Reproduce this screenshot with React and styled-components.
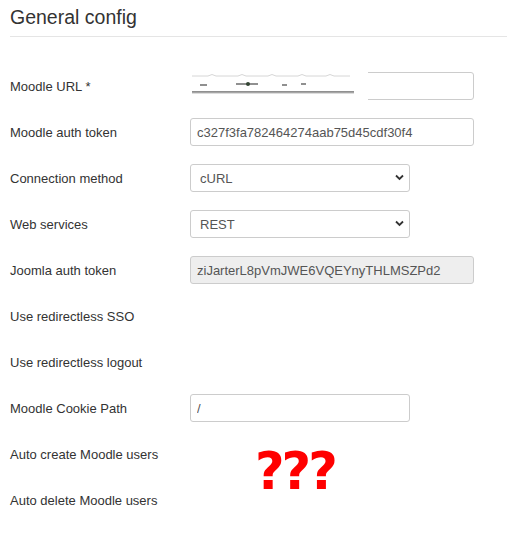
import React from 'react';
import styled, { createGlobalStyle } from 'styled-components';

const GlobalStyle = createGlobalStyle`
  body {
    margin: 0;
    background: #fff;
    font-family: "Liberation Sans", Arial, sans-serif;
    color: #333;
  }
`;

const Page = styled.div`
  padding: 0 0 0 10px;
  width: 497px;
`;

const Heading = styled.h2`
  margin: 0;
  padding: 7px 0 9px;
  font-size: 19.5px;
  font-weight: normal;
  line-height: 20px;
  color: #333;
  border-bottom: 1px solid #e5e5e5;
`;

const Form = styled.div`
  display: flex;
  flex-direction: column;
  padding-top: 26px;
`;

const Row = styled.div`
  display: grid;
  grid-template-columns: 180px 1fr;
  align-items: center;
  height: 46px;
  position: relative;
`;

const Label = styled.label`
  font-size: 13px;
  color: #333;
`;

const TextInput = styled.input`
  box-sizing: border-box;
  width: ${p => p.$w || 284}px;
  height: 28px;
  padding: 0 6px;
  border: 1px solid #ccc;
  border-radius: 3px;
  font-family: "Liberation Sans", Arial, sans-serif;
  font-size: 13px;
  color: #555;
  background: ${p => (p.readOnly ? '#eee' : '#fff')};
  outline: none;
`;

const SelectWrap = styled.div`
  position: relative;
  width: 220px;
  height: 28px;
`;

const Select = styled.select`
  box-sizing: border-box;
  width: 100%;
  height: 28px;
  padding: 0 6px 0 9px;
  border: 1px solid #ccc;
  border-radius: 3px;
  appearance: none;
  background: #fff;
  font-family: "Liberation Sans", Arial, sans-serif;
  font-size: 13px;
  color: #555;
  outline: none;
`;

const Chevron = styled.svg`
  position: absolute;
  right: 6px;
  top: 10px;
  pointer-events: none;
`;

const FieldBox = styled.div`
  position: relative;
  width: 284px;
`;

const Redaction = styled.div`
  position: absolute;
  left: -4px;
  top: -2px;
  width: 182px;
  height: 30px;
  background: #fff;
`;

const Marks = styled.div`
  position: absolute;
  left: 255px;
  top: 446px;
  font-family: "DejaVu Sans", "Liberation Sans", sans-serif;
  font-weight: bold;
  font-size: 51px;
  line-height: 52px;
  letter-spacing: -3px;
  color: #f00;
`;

function Dropdown({ value }) {
  return (
    <SelectWrap>
      <Select defaultValue={value}>
        <option>{value}</option>
      </Select>
      <Chevron width="9" height="7" viewBox="0 0 9 7">
        <path d="M1 1.5 L4.5 5 L8 1.5" fill="none" stroke="#333" strokeWidth="1.8" />
      </Chevron>
    </SelectWrap>
  );
}

export default function App() {
  return (
    <>
      <GlobalStyle />
      <Page>
        <Heading>General config</Heading>
        <Form>
          <Row>
            <Label>Moodle URL *</Label>
            <FieldBox>
              <TextInput defaultValue="" />
              <Redaction>
                <svg width="182" height="30" viewBox="0 0 182 30">
                  <path d="M6 6 H22 Q26 3 30 6 H52 Q56 3 60 6 H82 Q86 3 90 6 H112 Q116 3 120 6 H140 Q144 3 148 6 H164" fill="none" stroke="#ccc" strokeWidth="0.8" />
                  <path d="M14 15 H21 M50 14 H72 M96 15 H101 M115 14 H120 M6 22 H168" stroke="#222" strokeWidth="1.2" />
                  <circle cx="62" cy="14" r="2" fill="#343" />
                  <path d="M6 23 H168" stroke="#bbb" strokeWidth="1" />
                </svg>
              </Redaction>
            </FieldBox>
          </Row>
          <Row>
            <Label>Moodle auth token</Label>
            <TextInput defaultValue="c327f3fa782464274aab75d45cdf30f4" />
          </Row>
          <Row>
            <Label>Connection method</Label>
            <Dropdown value="cURL" />
          </Row>
          <Row>
            <Label>Web services</Label>
            <Dropdown value="REST" />
          </Row>
          <Row>
            <Label>Joomla auth token</Label>
            <TextInput readOnly defaultValue="ziJarterL8pVmJWE6VQEYnyTHLMSZPd2" />
          </Row>
          <Row>
            <Label>Use redirectless SSO</Label>
          </Row>
          <Row>
            <Label>Use redirectless logout</Label>
          </Row>
          <Row>
            <Label>Moodle Cookie Path</Label>
            <TextInput $w={220} defaultValue="/" />
          </Row>
          <Row>
            <Label>Auto create Moodle users</Label>
          </Row>
          <Row>
            <Label>Auto delete Moodle users</Label>
          </Row>
        </Form>
      </Page>
      <Marks>???</Marks>
    </>
  );
}
